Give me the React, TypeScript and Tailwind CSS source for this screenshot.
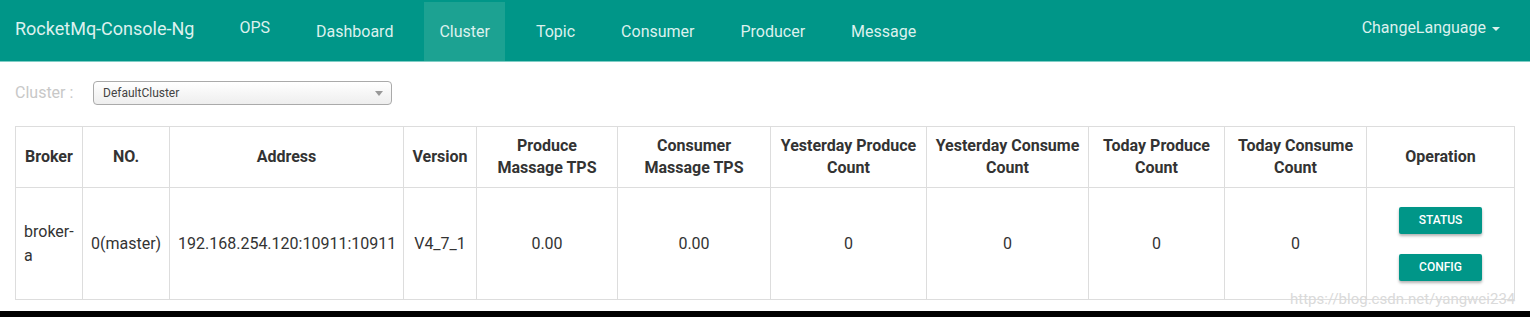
const navItems = ["Dashboard", "Cluster", "Topic", "Consumer", "Producer", "Message"];

const headers: string[][] = [
  ["Broker"],
  ["NO."],
  ["Address"],
  ["Version"],
  ["Produce", "Massage TPS"],
  ["Consumer", "Massage TPS"],
  ["Yesterday Produce", "Count"],
  ["Yesterday Consume", "Count"],
  ["Today Produce", "Count"],
  ["Today Consume", "Count"],
  ["Operation"],
];

const widths = [67, 87, 234, 73, 141, 153, 156, 162, 136, 142, 148];

const row = ["broker-a", "0(master)", "192.168.254.120:10911:10911", "V4_7_1", "0.00", "0.00", "0", "0", "0", "0"];

export default function App() {
  return (
    <div className="relative flex h-[317px] flex-col bg-white font-['Roboto',sans-serif]">
      <nav className="flex h-[62px] shrink-0 items-stretch border-b border-[#7fcdc5] bg-[#009688] pl-[15px] pr-[30px] text-[#dcf1ee]">
        <div className="flex items-center pb-[4px] text-[18px]">RocketMq-Console-Ng</div>
        <div className="ml-[30px] flex items-center px-[15px] pb-[6px] text-[16px]">OPS</div>
        {navItems.map((item) => (
          <div
            key={item}
            className={
              "ml-[16px] mt-[2px] flex items-center px-[15px] text-[16px] " +
              (item === "Cluster" ? "bg-[#1ca292]" : "")
            }
          >
            {item}
          </div>
        ))}
        <div className="ml-auto flex items-center gap-[6px] pb-[6px] text-[16px]">
          ChangeLanguage
          <span className="mt-[2px] h-0 w-0 border-x-[4px] border-t-[4px] border-x-transparent border-t-[#dcf1ee]" />
        </div>
      </nav>

      <div className="px-[15px] pt-[19px]">
        <div className="flex items-center">
          <span className="w-[78px] text-[16px] text-[#c8c8c8]">Cluster :</span>
          <div className="flex h-[24px] w-[299px] items-center justify-between rounded-[4px] border border-[#aaa] bg-gradient-to-b from-white to-[#eeeeee] pl-[9px] pr-[8px] text-[12px] text-[#444]">
            DefaultCluster
            <span className="h-0 w-0 border-x-[4px] border-t-[5px] border-x-transparent border-t-[#999]" />
          </div>
        </div>

        <table className="mt-[21px] w-[1499px] table-fixed border-collapse text-[16px] text-[#333]">
          <colgroup>
            {widths.map((w, i) => (
              <col key={i} style={{ width: w }} />
            ))}
          </colgroup>
          <thead>
            <tr className="h-[61px]">
              {headers.map((lines) => (
                <th
                  key={lines.join(" ")}
                  className="whitespace-nowrap border border-[#ddd] px-[4px] text-center font-bold leading-[22px]"
                >
                  {lines.map((l, i) => (
                    <div key={i}>{l}</div>
                  ))}
                </th>
              ))}
            </tr>
          </thead>
          <tbody>
            <tr className="h-[112px]">
              {row.map((c, i) => (
                <td
                  key={i}
                  className={
                    "border border-[#ddd] px-[8px] leading-[24px] " + (i === 0 ? "text-left" : "text-center")
                  }
                >
                  {c}
                </td>
              ))}
              <td className="border border-[#ddd] px-[8px]">
                <div className="flex flex-col items-center gap-[20px]">
                  <button className="h-[27px] w-[83px] rounded-[2px] bg-[#009688] text-[12px] font-medium text-white shadow-[0_2px_3px_rgba(0,0,0,0.3)]">
                    STATUS
                  </button>
                  <button className="h-[27px] w-[83px] rounded-[2px] bg-[#009688] text-[12px] font-medium text-white shadow-[0_2px_3px_rgba(0,0,0,0.3)]">
                    CONFIG
                  </button>
                </div>
              </td>
            </tr>
          </tbody>
        </table>
      </div>

      <div className="mt-auto h-[6px] bg-black" />
      <span className="absolute left-[1290px] top-[288px] text-[15px] text-[#dadada]">https://blog.csdn.net/yangwei234</span>
    </div>
  );
}
